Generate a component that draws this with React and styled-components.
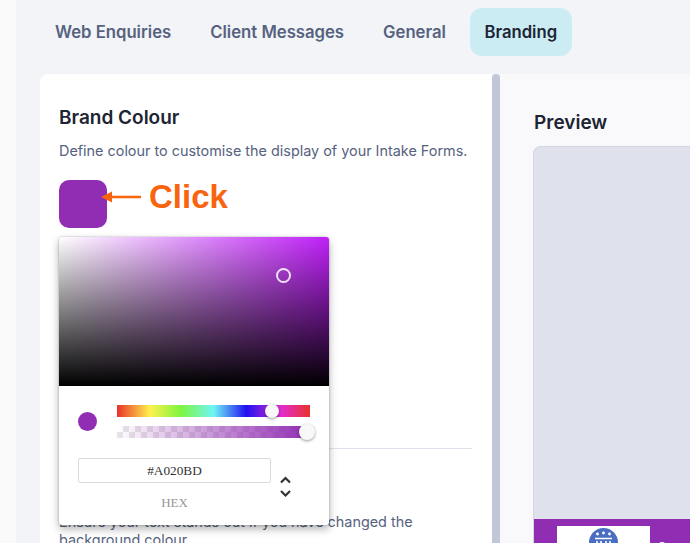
import React from "react";
import styled, { createGlobalStyle } from "styled-components";

const Global = createGlobalStyle`
  html, body {
    margin: 0;
    padding: 0;
    height: 543px;
    overflow: hidden;
    background: #fafafb;
    font-family: Inter, "Liberation Sans", sans-serif;
  }
  * { box-sizing: border-box; }
`;

const Page = styled.div`
  width: 690px;
  height: 543px;
  margin-left: 16px;
  background: #f2f4f7;
  overflow: hidden;
  padding-left: 24px;
`;

const Tabs = styled.nav`
  display: flex;
  height: 74px;
  padding-top: 8px;
  align-items: flex-start;
`;

const Tab = styled.div`
  height: 48px;
  padding: 0 ${(p) => (p.$active ? 14.5 : 15)}px;
  margin-right: 9px;
  display: flex;
  align-items: center;
  border-radius: 12px;
  font-size: 16.7px;
  font-weight: 600;
  white-space: nowrap;
  color: ${(p) => (p.$active ? "#1d2433" : "#56627f")};
  background: ${(p) => (p.$active ? "#ccecf3" : "transparent")};
`;

const Panels = styled.div`
  display: flex;
  height: 469px;
`;

const EditPanel = styled.section`
  position: relative;
  width: 452px;
  flex: none;
  background: #fff;
  border-radius: 8px 0 0 0;
  padding: 33px 20px 0 19px;
`;

const Divider = styled.div`
  width: 8px;
  flex: none;
  background: #c1c7d8;
  border-radius: 4px 4px 0 0;
`;

const PreviewPanel = styled.section`
  flex: 1;
  background: #f9f9fb;
  padding: 38px 0 0 33px;
`;

const Heading = styled.h2`
  margin: 0;
  font-size: 19px;
  line-height: 22px;
  font-weight: 600;
  color: #1d2433;
`;

const PreviewHeading = styled(Heading)`
  margin: 0 0 12px 1px;
`;

const Help = styled.p`
  margin: 12px 0 0;
  font-size: 14.4px;
  line-height: ${(p) => p.$leading || 20}px;
  color: #56627f;
`;

const SwatchRow = styled.div`
  display: flex;
  align-items: flex-start;
  margin-top: 19px;
  height: 48px;
`;

const Swatch = styled.div`
  width: 48px;
  height: 48px;
  border-radius: 10px;
  background: #912db2;
  flex: none;
`;

const Arrow = styled.svg`
  width: 40px;
  height: 12px;
  margin: 11px 0 0 -6px;
  flex: none;
`;

const ClickLabel = styled.span`
  margin: 0 0 0 8px;
  font-family: "Liberation Sans", Arial, sans-serif;
  font-size: 33px;
  line-height: 34px;
  font-weight: 700;
  color: #f9650f;
`;

const Rule = styled.hr`
  border: 0;
  height: 1px;
  background: #dfe2ec;
  margin: 220px 0 0;
`;

const TextSection = styled.div`
  margin-top: 64px;
`;

const Popover = styled.div`
  position: absolute;
  left: 19px;
  top: 163px;
  width: 270px;
  height: 288px;
  background: #fff;
  border-radius: 3px;
  box-shadow: 0 0 2px rgba(0, 0, 0, 0.3), 0 4px 8px rgba(0, 0, 0, 0.3);
  overflow: hidden;
`;

const Saturation = styled.div`
  position: relative;
  height: 149px;
  background: linear-gradient(to top, #000, transparent),
    linear-gradient(to right, #fff, #bf20f8);
`;

const Pointer = styled.div`
  position: absolute;
  left: 217px;
  top: 31px;
  width: 15px;
  height: 15px;
  border-radius: 50%;
  border: 2px solid rgba(255, 255, 255, 0.85);
`;

const Controls = styled.div`
  display: flex;
  align-items: center;
  padding: 19px 19px 0;
`;

const ColorDot = styled.div`
  width: 19px;
  height: 19px;
  border-radius: 50%;
  background: #912db2;
  flex: none;
  margin-right: 20px;
`;

const Sliders = styled.div`
  flex: 1;
  display: flex;
  flex-direction: column;
  gap: 9px;
`;

const Track = styled.div`
  position: relative;
  height: 12px;
  background: ${(p) => p.$bg};
`;

const Thumb = styled.div`
  position: absolute;
  top: ${(p) => (12 - p.$size) / 2}px;
  left: ${(p) => p.$left}px;
  width: ${(p) => p.$size}px;
  height: ${(p) => p.$size}px;
  border-radius: 50%;
  background: #f8f8f8;
  box-shadow: 0 1px 3px rgba(0, 0, 0, 0.4);
`;

const Fields = styled.div`
  display: flex;
  padding: 20px 0 0 19px;
`;

const FieldColumn = styled.div`
  width: 193px;
  flex: none;
`;

const HexInput = styled.div`
  height: 25px;
  border: 1px solid #dadada;
  border-radius: 2px;
  display: flex;
  align-items: center;
  justify-content: center;
  font-family: "Liberation Serif", serif;
  font-size: 13.3px;
  color: #333;
`;

const HexLabel = styled.div`
  margin-top: 13px;
  text-align: center;
  font-family: "Liberation Serif", serif;
  font-size: 13px;
  line-height: 14px;
  color: #969696;
`;

const Toggle = styled.svg`
  width: 12px;
  height: 24px;
  margin: 17px 0 0 8px;
  flex: none;
`;

const PreviewBox = styled.div`
  height: 420px;
  border: 1px solid #d3d7e4;
  border-right: 0;
  border-radius: 8px 0 0 0;
  background: #dfe2ec;
  padding-top: 372px;
`;

const Band = styled.div`
  height: 60px;
  background: #912db2;
  padding: 7px 0 0 23px;
  display: flex;
  align-items: flex-start;
`;

const LogoCard = styled.div`
  width: 93px;
  height: 60px;
  background: #fff;
  display: flex;
  justify-content: center;
  padding-top: 2px;
  flex: none;
`;

const BandText = styled.span`
  margin: 13px 0 0 8px;
  font-size: 12px;
  font-weight: 700;
  color: #fff;
`;

const hue =
  "linear-gradient(to right, #e8322a 0%, #fff14d 17%, #7ef53f 33%, #6ff5f5 50%, #2010f0 67%, #e32cd0 85%, #e8322a 100%)";
const alpha =
  "linear-gradient(to right, rgba(145,45,178,0), #912db2), conic-gradient(#e6e6e6 25%, #fff 0 50%, #e6e6e6 0 75%, #fff 0) 0 0 / 12px 12px";

export default function App() {
  return (
    <Page>
      <Global />
      <Tabs>
        <Tab>Web Enquiries</Tab>
        <Tab>Client Messages</Tab>
        <Tab>General</Tab>
        <Tab $active>Branding</Tab>
      </Tabs>
      <Panels>
        <EditPanel>
          <Heading>Brand Colour</Heading>
          <Help>Define colour to customise the display of your Intake Forms.</Help>
          <SwatchRow>
            <Swatch />
            <Arrow viewBox="0 0 40 12">
              <path d="M0 6 L11 0.5 V4.7 H40 V7.3 H11 V11.5 Z" fill="#f9650f" />
            </Arrow>
            <ClickLabel>Click</ClickLabel>
          </SwatchRow>
          <Rule />
          <TextSection>
            <Help $leading={18}>
              Ensure your text stands out if you have changed the background colour
            </Help>
          </TextSection>
          <Popover>
            <Saturation>
              <Pointer />
            </Saturation>
            <Controls>
              <ColorDot />
              <Sliders>
                <Track $bg={hue}>
                  <Thumb $left={148} $size={14} />
                </Track>
                <Track $bg={alpha}>
                  <Thumb $left={182} $size={16} />
                </Track>
              </Sliders>
            </Controls>
            <Fields>
              <FieldColumn>
                <HexInput>#A020BD</HexInput>
                <HexLabel>HEX</HexLabel>
              </FieldColumn>
              <Toggle viewBox="0 0 12 24">
                <path
                  d="M2 7.5 L6.5 3 L11 7.5 M2 16 L6.5 20.5 L11 16"
                  fill="none"
                  stroke="#333"
                  strokeWidth="2.2"
                />
              </Toggle>
            </Fields>
          </Popover>
        </EditPanel>
        <Divider />
        <PreviewPanel>
          <PreviewHeading>Preview</PreviewHeading>
          <PreviewBox>
            <Band>
              <LogoCard>
                <svg width="29" height="29" viewBox="0 0 29 29">
                  <circle cx="14.5" cy="14.5" r="14.5" fill="#4a6fc0" />
                  <circle cx="8.5" cy="6" r="1.4" fill="#fff" />
                  <circle cx="14.5" cy="5" r="1.4" fill="#fff" />
                  <circle cx="20.5" cy="6" r="1.4" fill="#fff" />
                  <path d="M6 10.5 H23 M8 13 V20 M12 13 V20 M17 13 V20 M21 13 V20" stroke="#fff" strokeWidth="1.6" />
                </svg>
              </LogoCard>
              <BandText>Sample</BandText>
            </Band>
          </PreviewBox>
        </PreviewPanel>
      </Panels>
    </Page>
  );
}
